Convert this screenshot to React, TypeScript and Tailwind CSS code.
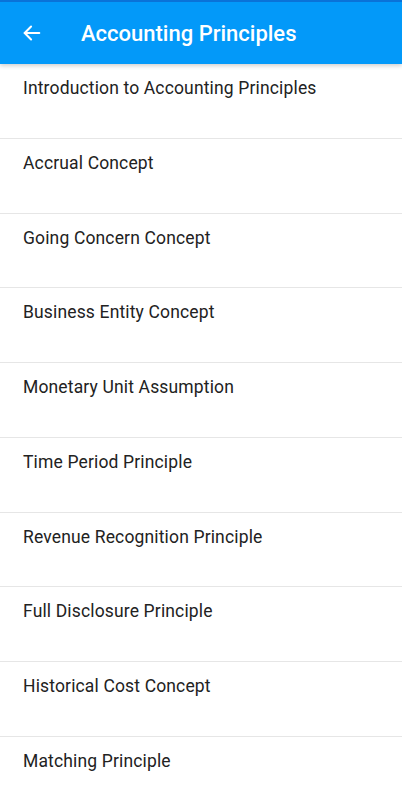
const TOPICS = [
  "Introduction to Accounting Principles",
  "Accrual Concept",
  "Going Concern Concept",
  "Business Entity Concept",
  "Monetary Unit Assumption",
  "Time Period Principle",
  "Revenue Recognition Principle",
  "Full Disclosure Principle",
  "Historical Cost Concept",
  "Matching Principle",
];

export default function App() {
  return (
    <div className="h-[800px] w-[402px] overflow-hidden bg-white font-['Roboto',sans-serif]">
      <div className="relative z-10 border-t-2 border-[#0a72d8] bg-[#0399f9] shadow-[0_2px_4px_rgba(0,0,0,0.18)]">
        <div className="flex h-[62px] items-center">
          <button className="flex w-[63px] items-center justify-center text-white">
            <svg width="22" height="22" viewBox="0 0 24 24" fill="none" stroke="currentColor" strokeWidth="2.2" strokeLinecap="round" strokeLinejoin="round">
              <path d="M20 12H4" />
              <path d="M11 5l-7 7 7 7" />
            </svg>
          </button>
          <h1 className="ml-[18px] text-[22px] font-medium text-white">
            Accounting Principles
          </h1>
        </div>
      </div>

      <ul>
        {TOPICS.map((t) => (
          <li
            key={t}
            className="h-[74.75px] border-b border-[#e6e6e6] pl-[23px] pt-[14px] text-[17.5px] font-normal leading-[20px] tracking-[0.15px] text-[#222]"
          >
            {t}
          </li>
        ))}
      </ul>
    </div>
  );
}
